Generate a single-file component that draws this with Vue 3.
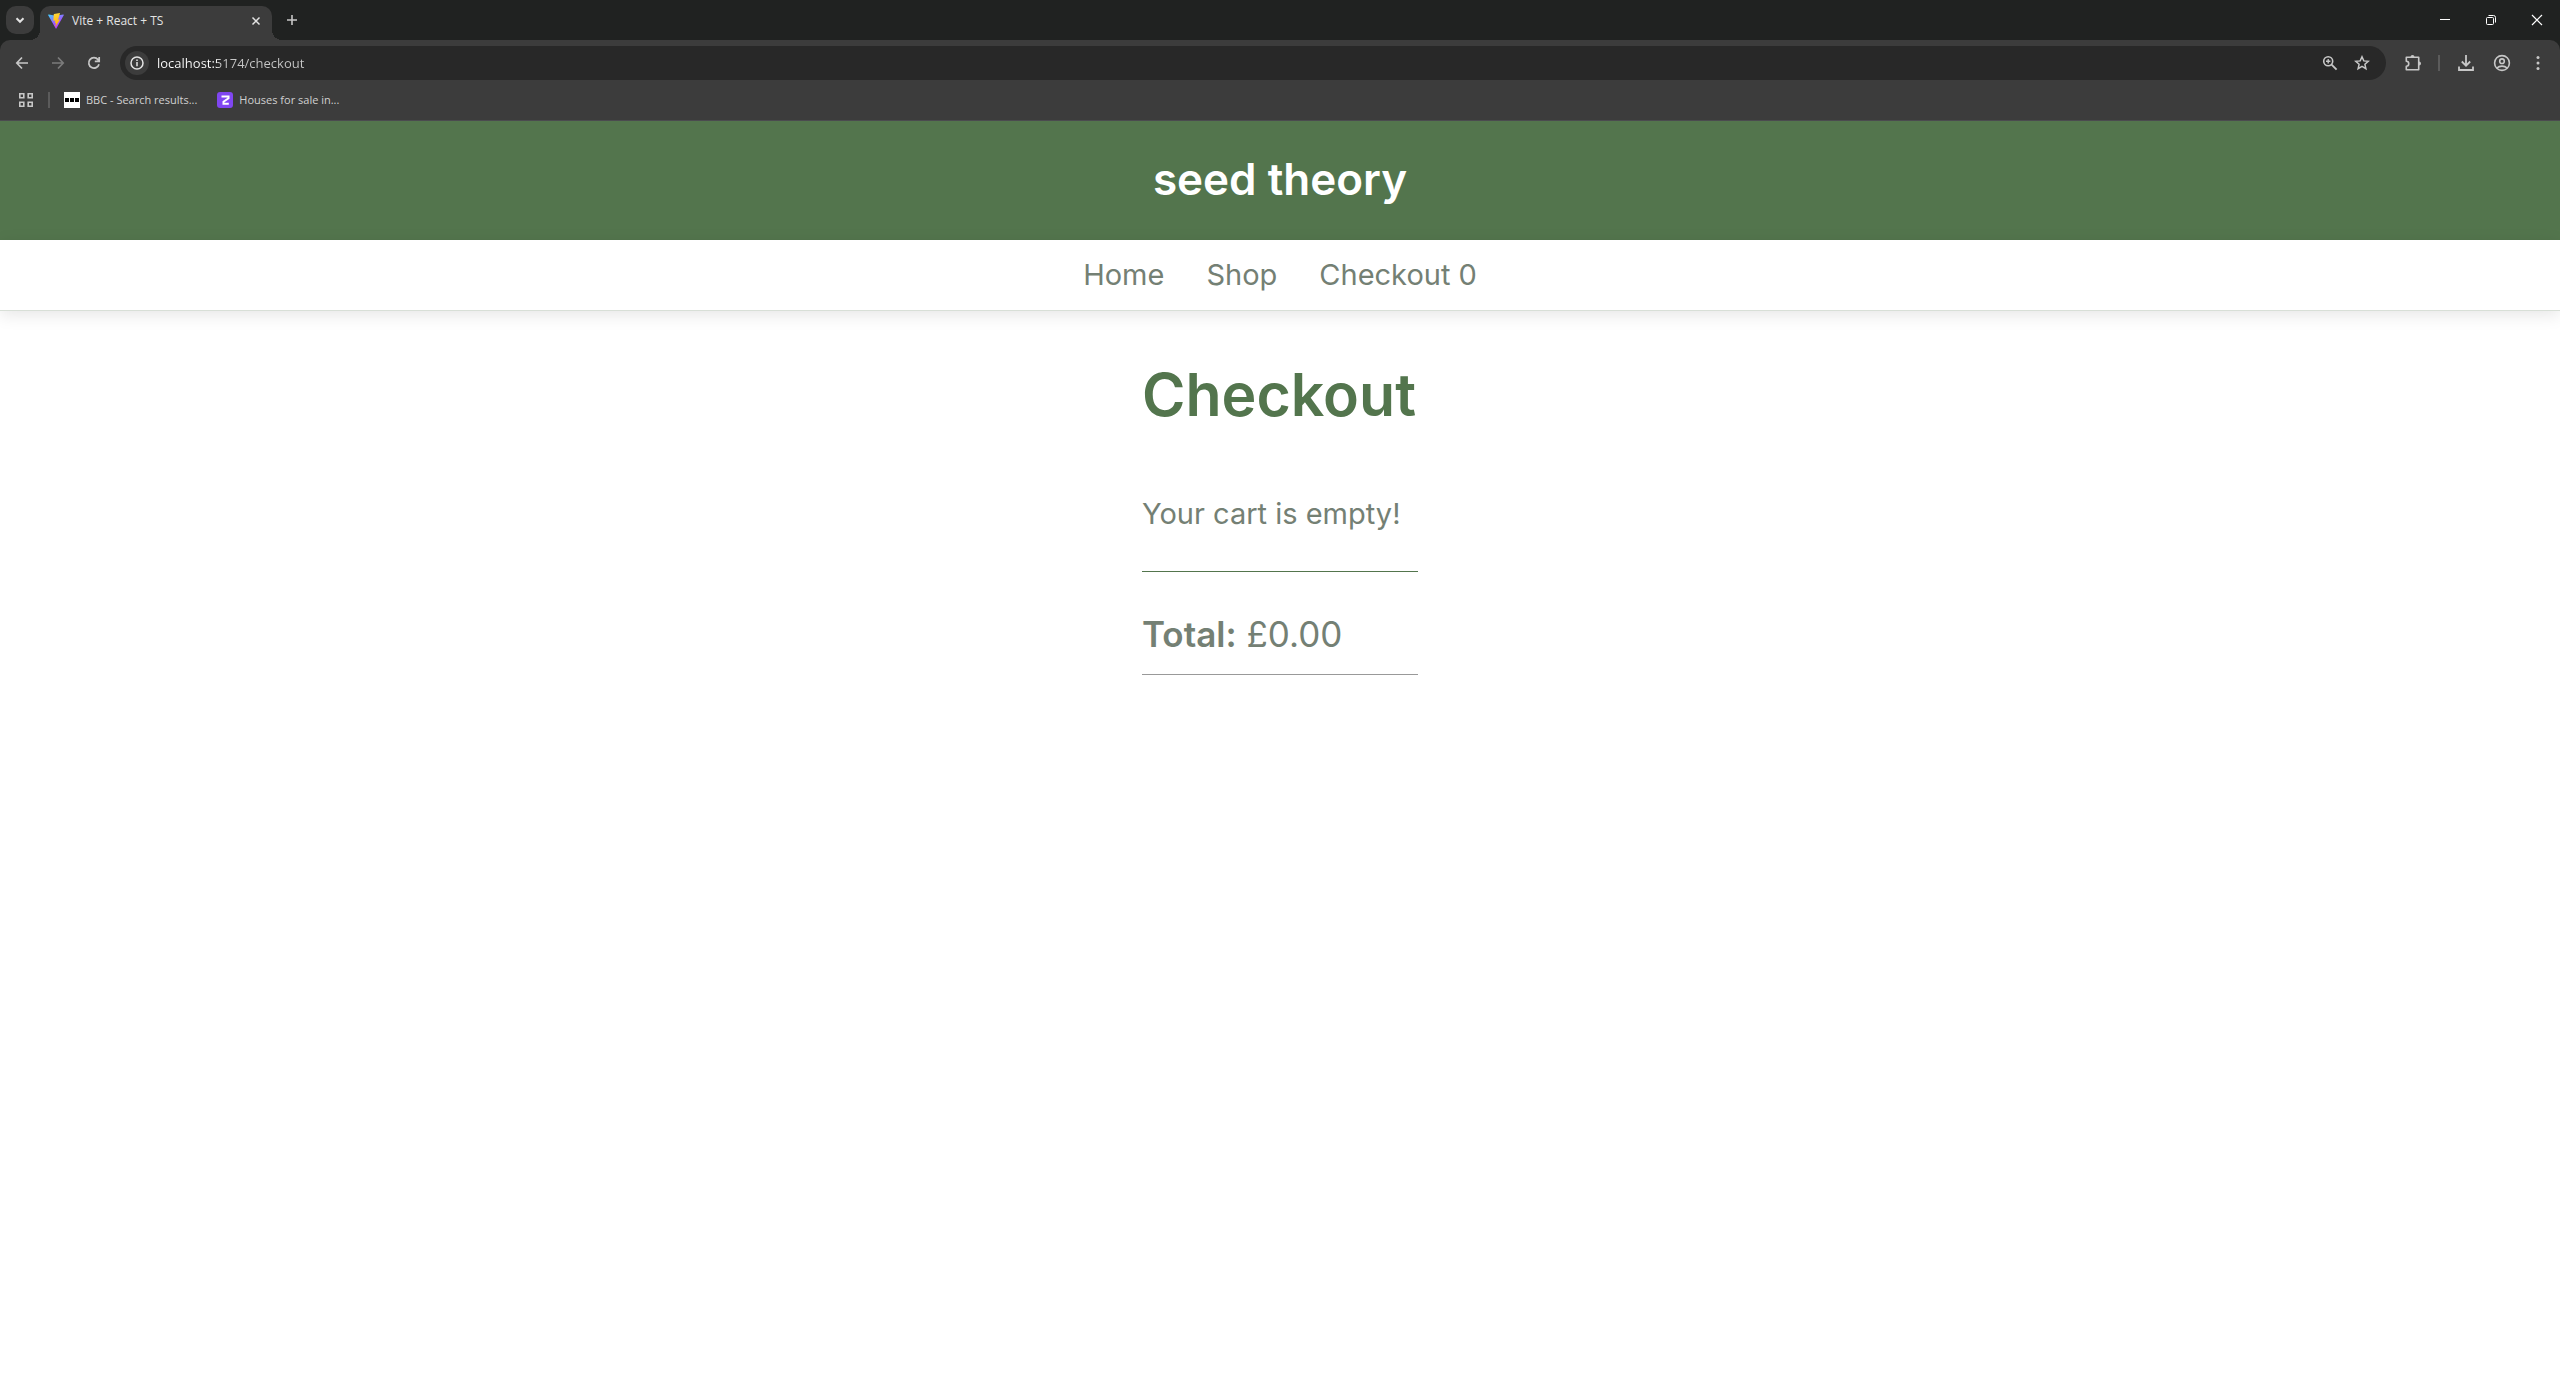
<script setup>
import { ref } from 'vue'

const address = ref('localhost:5174/checkout')
const cart = ref([])
const links = [
  { label: 'Home', href: '/' },
  { label: 'Shop', href: '/shop' },
  { label: 'Checkout 0', href: '/checkout' },
]
</script>

<template>
  <div class="browser">
    <div class="tabstrip">
      <button class="tab-search" aria-label="Search tabs">
        <svg width="16" height="16" viewBox="0 0 16 16"><path d="M4.5 6.3 8 9.8l3.5-3.5" fill="none" stroke="#e3e3e3" stroke-width="2" /></svg>
      </button>
      <div class="tab">
        <svg class="favicon" width="16" height="16" viewBox="0 0 32 32">
          <defs>
            <linearGradient id="wedge" x1="0" y1="0" x2="0.6" y2="1">
              <stop offset="0" stop-color="#41d1ff" />
              <stop offset="0.6" stop-color="#9b5cff" />
              <stop offset="1" stop-color="#bd34fe" />
            </linearGradient>
            <linearGradient id="bolt" x1="0.4" y1="0" x2="0.6" y2="1">
              <stop offset="0" stop-color="#ffd83a" />
              <stop offset="1" stop-color="#ffa800" />
            </linearGradient>
          </defs>
          <path d="M31.5 4.5 17 30.7a1 1 0 0 1-1.8 0L.4 4.500a1 1 0 0 1 1-1.500L16 5.600l14.500-2.600a1 1 0 0 1 1 1.500z" fill="url(#wedge)" />
          <path d="M23.500 0 12 2.200a.5.5 0 0 0-.4.400l-.9 12.500a.5.5 0 0 0 .6.500l3.400-.7-1 5.600 2.300-.4-1.600 8.300L24 13l-3.900.6L24 .500z" fill="url(#bolt)" />
        </svg>
        <span class="tab-title">Vite + React + TS</span>
        <button class="tab-close" aria-label="Close tab">
          <svg width="10" height="10" viewBox="0 0 10 10"><path d="m1.500 1.500 7 7m0-7-7 7" stroke="#e3e3e3" stroke-width="1.500" /></svg>
        </button>
      </div>
      <button class="new-tab" aria-label="New tab">
        <svg width="12" height="12" viewBox="0 0 12 12"><path d="M6 1v10M1 6h10" stroke="#c7c7c7" stroke-width="1.600" /></svg>
      </button>
      <div class="window-controls">
        <button aria-label="Minimize"><svg width="12" height="12" viewBox="0 0 12 12"><path d="M1 5.500h10" stroke="#fff" /></svg></button>
        <button aria-label="Restore"><svg width="12" height="12" viewBox="0 0 12 12" fill="none" stroke="#fff"><rect x="1.500" y="3.500" width="7" height="7" rx="1" /><path d="M3.500 1.500h5a2 2 0 0 1 2 2v5" /></svg></button>
        <button aria-label="Close window"><svg width="12" height="12" viewBox="0 0 12 12"><path d="m1 1 10 10M11 1 1 11" stroke="#fff" stroke-width="1.200" /></svg></button>
      </div>
    </div>

    <div class="chrome">
      <div class="toolbar">
        <button class="tool" aria-label="Back">
          <svg width="16" height="16" viewBox="0 0 16 16"><path d="M8 2.500 2.800 8 8 13.500M3 8h11" fill="none" stroke="#c7c7c7" stroke-width="1.700" /></svg>
        </button>
        <button class="tool" aria-label="Forward">
          <svg width="16" height="16" viewBox="0 0 16 16"><path d="M8 2.500 13.200 8 8 13.500M13 8H2" fill="none" stroke="#7b7b7b" stroke-width="1.700" /></svg>
        </button>
        <button class="tool" aria-label="Reload">
          <svg width="16" height="16" viewBox="0 0 16 16"><path d="M13 9.200A5.200 5.200 0 1 1 12 4.600L13 6M13.200 2v4.400H8.800" fill="none" stroke="#c7c7c7" stroke-width="1.700" /></svg>
        </button>
        <div class="address">
          <button class="site-info" aria-label="View site information">
            <svg width="14" height="14" viewBox="0 0 14 14"><circle cx="7" cy="7" r="6" fill="none" stroke="#e3e3e3" stroke-width="1.500" /><path d="M7 6v4.200M7 3.500v1.500" stroke="#e3e3e3" stroke-width="1.500" /></svg>
          </button>
          <input v-model="address" class="url" type="text" aria-label="Address" spellcheck="false" />
          <button class="inner-tool" aria-label="Zoom level">
            <svg width="16" height="16" viewBox="0 0 16 16" fill="none" stroke="#c7c7c7"><circle cx="6.200" cy="6.200" r="4.500" stroke-width="1.600" /><path d="m9.600 9.600 5 5" stroke-width="1.800" /><path d="M6.200 4v4.400M4 6.200h4.400" stroke-width="1.400" /></svg>
          </button>
          <button class="inner-tool" aria-label="Bookmark this tab">
            <svg width="16" height="16" viewBox="0 0 16 16"><path d="m8 1.800 1.800 4.100 4.500.4-3.400 3 1 4.400L8 11.400l-3.900 2.300 1-4.400-3.400-3 4.500-.4z" fill="none" stroke="#c7c7c7" stroke-width="1.500" /></svg>
          </button>
        </div>
        <button class="tool" aria-label="Extensions">
          <svg width="18" height="18" viewBox="-1 0 18 18"><path d="M2.300 3.300h12.400v12.400H2.300v-3.500a2.300 2.300 0 0 0 0-4.900z" fill="none" stroke="#c7c7c7" stroke-width="1.600" stroke-linejoin="round" /><path d="M6.500 3a2 2 0 0 1 4 0zM15 7.500a2 2 0 0 1 0 4z" fill="#c7c7c7" /></svg>
        </button>
        <span class="divider"></span>
        <button class="tool" aria-label="Downloads">
          <svg width="18" height="18" viewBox="0 0 18 18"><path d="M9 1v10.500M4.800 7.500 9 11.700l4.200-4.200M2 12.500v3.500h14v-3.500" fill="none" stroke="#c7c7c7" stroke-width="1.800" /></svg>
        </button>
        <button class="tool" aria-label="Profile">
          <svg width="18" height="18" viewBox="0 0 18 18" fill="none" stroke="#c7c7c7" stroke-width="1.600"><circle cx="9" cy="9" r="7.400" /><circle cx="9" cy="7.200" r="2.300" /><path d="M3.800 14c2.800-2.500 7.600-2.500 10.400 0" /></svg>
        </button>
        <button class="tool" aria-label="Menu">
          <svg width="16" height="16" viewBox="0 0 16 16" fill="#c7c7c7"><circle cx="8" cy="2.500" r="1.500" /><circle cx="8" cy="8" r="1.500" /><circle cx="8" cy="13.500" r="1.500" /></svg>
        </button>
      </div>

      <div class="bookmarks">
        <button class="apps" aria-label="Apps">
          <svg width="16" height="16" viewBox="0 0 16 16" fill="none" stroke="#c7c7c7" stroke-width="1.600"><path d="M1.800 1.800h4v4h-4zM10.200 1.800h4v4h-4zM1.800 10.200h4v4h-4zM10.200 10.200h4v4h-4z" /></svg>
        </button>
        <span class="divider"></span>
        <a class="bookmark" href="#bbc">
          <svg width="16" height="16" viewBox="0 0 16 16"><path d="M0 0h16v16H0z" fill="#fff" /><path d="M1 6h4v4H1zM6 6h4v4H6zM11 6h4v4h-4z" fill="#000" /></svg>
          BBC - Search results...
        </a>
        <a class="bookmark" href="#houses">
          <svg width="16" height="16" viewBox="0 0 16 16"><rect width="16" height="16" rx="3" fill="#8046f1" /><path d="M4.500 4.500h7v1.800L6.500 9.700v2h5.300" fill="none" stroke="#fff" stroke-width="2" /></svg>
          Houses for sale in...
        </a>
      </div>
    </div>
  </div>

  <header class="banner"><span class="brand">seed theory</span></header>
  <nav class="site-nav">
    <a v-for="link in links" :key="link.label" :href="link.href">{{ link.label }}</a>
  </nav>
  <main class="checkout">
    <h1>Checkout</h1>
    <p v-if="!cart.length" class="empty">Your cart is empty!</p>
    <p class="total"><strong>Total:</strong> £0.00</p>
    <hr />
  </main>
</template>

<style>
body {
  background: #fff;
}
</style>

<style scoped>
button {
  display: flex;
  align-items: center;
  justify-content: center;
  padding: 0;
  border: 0;
  background: none;
}
.browser {
  background: #202221;
  color: #e3e3e3;
  font: 12px/16px "Open Sans", "Noto Sans", sans-serif;
}
.tabstrip {
  display: flex;
  height: 40px;
  padding-left: 6px;
}
.tab-search {
  width: 28px;
  height: 28px;
  margin: 6px 6px 0 0;
  border-radius: 10px;
  background: #3c3c3c;
}
.tab {
  position: relative;
  display: flex;
  align-items: center;
  gap: 8px;
  box-sizing: border-box;
  width: 232px;
  height: 34px;
  margin-top: 6px;
  padding: 0 8px 4px;
  border-radius: 10px 10px 0 0;
  background: #3c3c3c;
}
.tab::before,
.tab::after {
  content: "";
  position: absolute;
  bottom: 0;
  width: 10px;
  height: 10px;
}
.tab::before {
  left: -10px;
  background: radial-gradient(circle at 0 0, transparent 10px, #3c3c3c 10px);
}
.tab::after {
  right: -10px;
  background: radial-gradient(circle at 100% 0, transparent 10px, #3c3c3c 10px);
}
.tab-title {
  flex: 1;
}
.tab-close {
  width: 16px;
  height: 16px;
}
.new-tab {
  width: 28px;
  height: 28px;
  margin: 6px 0 0 6px;
}
.window-controls {
  display: flex;
  margin-left: auto;
}
.window-controls button {
  width: 46px;
}
.chrome {
  border-bottom: 1px solid #4b4b4f;
  border-radius: 10px 10px 0 0;
  background: #3c3c3c;
}
.toolbar {
  display: flex;
  align-items: center;
  padding: 6px 4px 0;
}
.tool {
  width: 36px;
  height: 34px;
}
.divider {
  width: 2px;
  height: 16px;
  margin: 0 8px;
  background: #5b5b5b;
}
.address {
  display: flex;
  flex: 1;
  align-items: center;
  height: 34px;
  margin: 0 8px;
  padding: 0 8px 0 5px;
  box-sizing: border-box;
  border-radius: 17px;
  background: #282828;
}
.site-info {
  width: 24px;
  height: 24px;
  border-radius: 12px;
  background: #3c3c3c;
}
.url {
  flex: 1;
  margin-left: 8px;
  padding: 0;
  border: 0;
  outline: 0;
  background: linear-gradient(90deg, #fff 60px, #c7c7c7 60px);
  background-clip: text;
  color: transparent;
  font: 13px/20px "Open Sans", "Noto Sans", sans-serif;
}
.inner-tool {
  width: 32px;
  height: 34px;
}
.bookmarks {
  display: flex;
  align-items: center;
  height: 40px;
  padding-left: 18px;
}
.apps {
  width: 16px;
  height: 16px;
  margin-right: 6px;
}
.bookmark {
  display: flex;
  align-items: center;
  gap: 6px;
  margin: 0 14px 0 6px;
  color: #d0d0d0;
  font-size: 11px;
  text-decoration: none;
}
.banner,
.site-nav,
.checkout {
  font-family: Inter, "Open Sans", sans-serif;
}
.banner {
  display: flex;
  justify-content: center;
  padding: 30px 0 33px;
  background: #53754d;
  color: #fff;
}
.brand {
  font-size: 44px;
  font-weight: 600;
  line-height: 56px;
}
.site-nav {
  display: flex;
  justify-content: center;
  gap: 42px;
  padding: 14px 0;
  border-bottom: 1px solid #d8dfd7;
  background: #fff;
  box-shadow: 0 4px 16px rgba(0, 0, 0, 0.1);
}
.site-nav a {
  color: #748074;
  font-size: 29px;
  line-height: 42px;
  text-decoration: none;
}
.checkout {
  width: fit-content;
  min-width: 276px;
  margin: 0 auto;
  color: #748074;
}
h1 {
  margin: 42px 0 0;
  color: #53754d;
  font-size: 59px;
  font-weight: 600;
  line-height: 84px;
}
.empty {
  margin: 56px 0 0;
  padding-bottom: 36px;
  border-bottom: 1px solid #53754d;
  font-size: 29px;
  line-height: 42px;
}
.total {
  margin: 36px 0 0;
  font-size: 35px;
  line-height: 52px;
}
.total strong {
  font-weight: 600;
}
hr {
  margin: 14px 0 0;
  border: 0;
  border-top: 1px solid #999;
}
</style>
